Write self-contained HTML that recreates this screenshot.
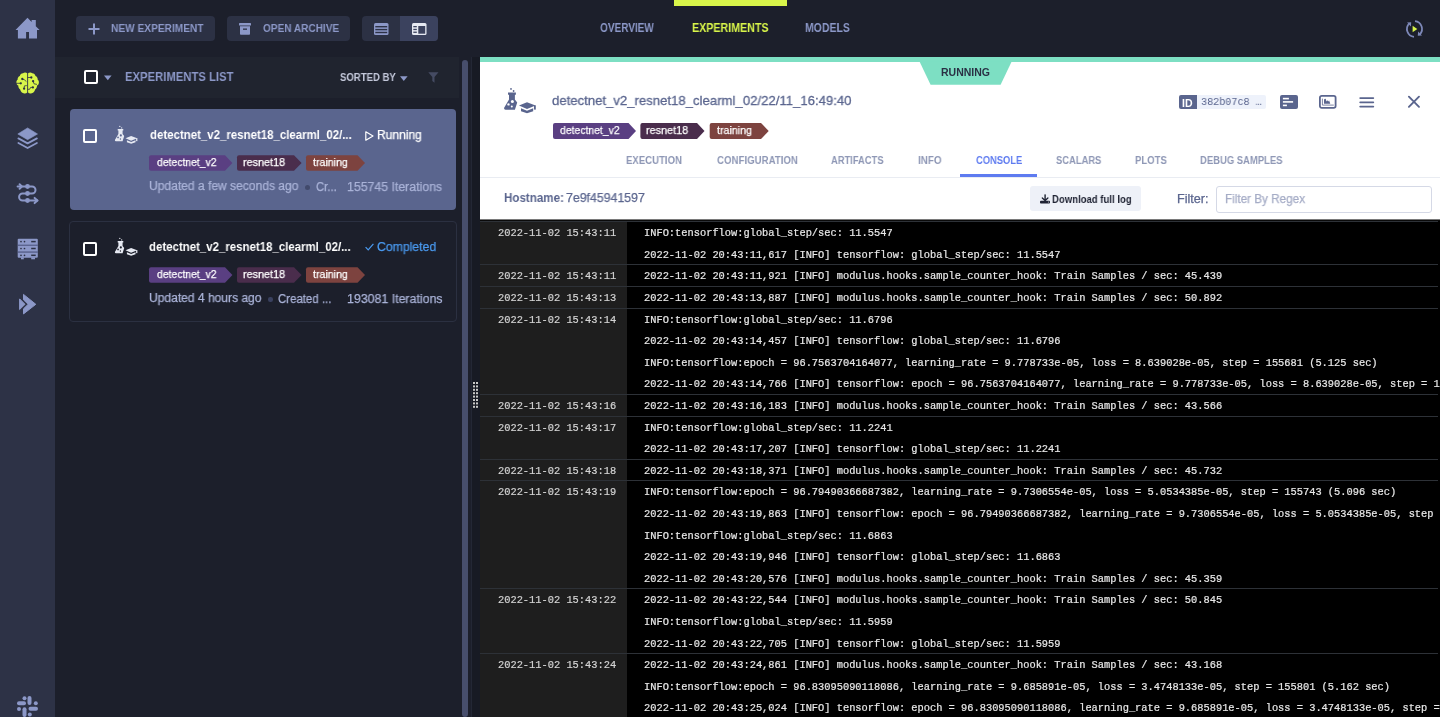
<!DOCTYPE html>
<html><head><meta charset="utf-8">
<style>
*{margin:0;padding:0;box-sizing:border-box}
html,body{width:1440px;height:717px;overflow:hidden;background:#1c1f2b;font-family:"Liberation Sans",sans-serif}
.a{position:absolute}
.t{position:absolute;white-space:nowrap;line-height:1;transform-origin:0 0;will-change:transform}
svg{position:absolute;overflow:visible}
.cb{position:absolute;width:14px;height:14px;border:2px solid #fff;border-radius:2px}
.tag{position:absolute}
#log{left:480px;top:220px;width:960px;height:497px;background:#000;overflow:hidden}
.ln{position:absolute;will-change:transform;font-family:"Liberation Mono",monospace;font-size:10.36px;color:#e8e8e8;white-space:pre;line-height:1;-webkit-text-stroke:0.2px #e8e8e8}
.ts{color:#d4d4d4;-webkit-text-stroke:0.2px #d4d4d4}
.sep{position:absolute;left:0;width:958px;height:1px;background:#2d3137}
</style></head><body>
<!-- sidebar -->
<div class="a" style="left:0;top:0;width:55px;height:717px;background:#2d3246"></div>
<!-- home -->
<svg style="left:12px;top:14px" width="30" height="28" viewBox="0 0 30 28"><path d="M3.5 16 L15.5 3.7 L19.6 7.9 V5.9 H23.8 V12.2 L27.6 16 H25 V24.4 H17 V18 H14.1 V24.4 H5.9 V16 Z" fill="#8c98c8"/></svg>
<!-- brain -->
<svg style="left:12px;top:68px" width="32" height="30" viewBox="0 0 32 30">
<path d="M15.2 5.3 C14.4 4.5 12.2 4.3 11 5.2 C9.4 5.2 8.1 6.4 7.8 8 C6.3 8.6 5.5 10 5.7 11.4 C4.5 12.2 4.1 13.8 4.5 15.2 C4.6 16.3 5.4 17.2 6.3 17.6 C6.2 19.4 6.9 20.8 8.2 21.5 C8.6 23.5 10.2 25.3 12.3 25.5 C13.4 25.7 14.6 25.3 15.2 24.6 Z" fill="#d8f54a"/>
<path d="M16.1 5.3 C16.9 4.5 19.1 4.3 20.3 5.2 C21.9 5.2 23.2 6.4 23.5 8 C25 8.6 25.8 10 25.6 11.4 C26.8 12.2 27.2 13.8 26.8 15.2 C26.7 16.3 25.9 17.2 25 17.6 C25.1 19.4 24.4 20.8 23.1 21.5 C22.7 23.5 21.1 25.3 19 25.5 C17.9 25.7 16.7 25.3 16.1 24.6 Z" fill="#d8f54a"/>
<g stroke="#2c3144" stroke-width="0.8" fill="none"><path d="M10.3 11 L12.5 11.9 L14.4 13.6"/><path d="M4 15.3 H8.8"/><path d="M12.1 20.7 L12.4 17.9 L14.8 17.6"/><path d="M19.3 9.5 H15.6"/><path d="M21.1 13.2 L22 15.8 L25 16.4"/><path d="M20.9 19.4 H18.6 L17.6 21.3 H15.6"/></g>
<g fill="#2c3144"><circle cx="10.3" cy="11" r="1.15"/><circle cx="8.8" cy="15.3" r="1.15"/><circle cx="12.1" cy="20.7" r="1.15"/><circle cx="19.3" cy="9.5" r="1.15"/><circle cx="21.1" cy="13.2" r="1.15"/><circle cx="20.9" cy="19.4" r="1.15"/></g>
</svg>
<!-- layers -->
<svg style="left:14px;top:124px" width="28" height="28" viewBox="0 0 28 28"><path d="M13.6 3.9 L23.5 10 L13.6 15.7 L3.8 10 Z" fill="#8c98c8" stroke="#8c98c8" stroke-width="0.6" stroke-linejoin="round"/><path d="M4.4 14.4 L13.6 19.4 L22.9 14.4 M4.4 19 L13.6 24 L22.9 19" fill="none" stroke="#8c98c8" stroke-width="1.8" stroke-linecap="round" stroke-linejoin="round"/></svg>
<!-- pipelines -->
<svg style="left:14px;top:180px" width="28" height="28" viewBox="0 0 28 28"><g fill="none" stroke="#8c98c8" stroke-width="2" stroke-linecap="round" stroke-linejoin="round"><path d="M3.6 6.5 H18 A3.5 3.5 0 0 1 18 13.5 H8.6 A3.5 3.5 0 0 0 8.6 20.5 H23.4"/><path d="M5.6 4.3 L7.9 6.5 L5.6 8.7"/><path d="M20.6 17.9 L23.4 20.5 L20.6 23.1"/></g><g fill="#8c98c8"><circle cx="13.5" cy="6.5" r="2.4"/><circle cx="13.5" cy="13.5" r="2.4"/><circle cx="13.5" cy="20.5" r="2.4"/></g></svg>
<!-- servers -->
<svg style="left:17px;top:238px" width="22" height="22" viewBox="0 0 22 22"><g fill="#8c98c8"><rect x="0.7" y="0.7" width="20.1" height="19.1" rx="1"/><rect x="4" y="19.3" width="2.8" height="2"/><rect x="14.2" y="19.3" width="3.8" height="2"/></g><g fill="#48507a"><rect x="0.7" y="6.7" width="20.1" height="1"/><rect x="0.7" y="13.5" width="20.1" height="1.1"/></g><g fill="#2d3246"><circle cx="4" cy="3.6" r="0.85"/><circle cx="7.5" cy="3.6" r="0.85"/><rect x="14.2" y="2.85" width="4.5" height="1.5"/><circle cx="4" cy="10.5" r="0.85"/><circle cx="7.5" cy="10.5" r="0.85"/><rect x="14.2" y="9.75" width="4.5" height="1.5"/><circle cx="4" cy="17.3" r="0.85"/><circle cx="7.5" cy="17.3" r="0.85"/><rect x="14.2" y="16.55" width="4.5" height="1.5"/></g></svg>
<!-- deploy -->
<svg style="left:14px;top:290px" width="28" height="28" viewBox="0 0 28 28"><g fill="#8c98c8" stroke="#8c98c8" stroke-width="1" stroke-linejoin="round"><path d="M5.6 8.9 L11 14.3 L5.6 19.5 Z"/><path d="M9.5 4.4 L21.8 14.3 L9.5 23.9 V18.8 L14.2 14.3 L9.5 9.8 Z"/></g></svg>
<!-- slack -->
<svg style="left:17px;top:696px" width="21" height="21" viewBox="0 0 21 21"><g fill="#8c98c8"><rect x="10.5" y="0" width="4" height="9" rx="2"/><circle cx="7.5" cy="2.3" r="2"/><rect x="0" y="5.3" width="9" height="4" rx="2"/><circle cx="18.8" cy="7.3" r="2"/><rect x="11.5" y="10.8" width="9.5" height="4" rx="2"/><circle cx="2" cy="13" r="2"/><rect x="5.5" y="11.2" width="4" height="9.8" rx="2"/><circle cx="12.8" cy="18.5" r="2"/></g></svg>

<!-- top buttons -->
<div class="a" style="left:76px;top:16px;width:139px;height:25px;background:#2c3144;border-radius:4px"></div>
<svg style="left:88px;top:23px" width="12" height="12" viewBox="0 0 12 12"><path d="M6 0.5 V11.5 M0.5 6 H11.5" stroke="#8c98c8" stroke-width="2"/></svg>
<div class="a" style="left:227px;top:16px;width:123px;height:25px;background:#2c3144;border-radius:4px"></div>
<svg style="left:239px;top:23px" width="12" height="12" viewBox="0 0 12 12"><rect x="0" y="0" width="12" height="2.5" rx="0.6" fill="#8c98c8"/><path d="M1 3.3 H11 V11 Q11 11.8 10.2 11.8 H1.8 Q1 11.8 1 11 Z" fill="#8c98c8"/><rect x="4" y="5.5" width="4" height="1.3" fill="#2c3144"/></svg>
<div class="a" style="left:362px;top:16px;width:76px;height:25px;background:#2c3144;border-radius:4px"></div>
<div class="a" style="left:400px;top:16px;width:38px;height:25px;background:#3b425e;border-radius:0 4px 4px 0"></div>
<svg style="left:373.5px;top:23px" width="15" height="12" viewBox="0 0 15 12"><rect x="0" y="0" width="14.5" height="12" rx="1.5" fill="#8c98c8"/><g fill="#2d3246"><rect x="1.3" y="3" width="11.9" height="1.4"/><rect x="1.3" y="5.9" width="11.9" height="1.4"/><rect x="1.3" y="8.8" width="11.9" height="1.4"/></g></svg>
<svg style="left:412px;top:23px" width="15" height="12" viewBox="0 0 15 12"><rect x="0" y="0" width="14.5" height="12" rx="1.5" fill="#e6e9f2"/><rect x="6.3" y="3" width="6.9" height="7.7" fill="#3b425e"/><g fill="#3b425e"><rect x="1.3" y="3" width="3.5" height="1.3"/><rect x="1.3" y="5.8" width="3.5" height="1.3"/><rect x="1.3" y="8.6" width="3.5" height="1.3"/></g></svg>

<!-- nav -->
<div class="a" style="left:674px;top:0;width:113px;height:6px;background:#d8f54a"></div>
<!-- sync icon -->
<svg style="left:1405px;top:20px" width="19" height="18" viewBox="0 0 19 18"><g fill="none" stroke="#7d88b8" stroke-width="1.8"><path d="M10 1.2 A7.8 7.8 0 0 1 14.8 14.4"/><path d="M9 16.8 A7.8 7.8 0 0 1 4.2 3.6"/></g><path d="M2 2.6 L6.2 2.3 L5.9 6.4 Z" fill="#7d88b8"/><path d="M17 15.4 L12.8 15.7 L13.1 11.6 Z" fill="#7d88b8"/><path d="M7.6 5.8 L12.3 9 L7.6 12.2 Z" fill="#d8f54a"/></svg>

<!-- list header -->
<div class="a" style="left:55px;top:57px;width:404px;height:41px;background:#20242f"></div>
<div class="cb" style="left:84px;top:70px"></div>
<svg style="left:104px;top:75px" width="8" height="6" viewBox="0 0 8 6"><path d="M0 0.5 H7.6 L3.8 5.3 Z" fill="#8c98c8"/></svg>
<svg style="left:399.5px;top:76px" width="8" height="6" viewBox="0 0 8 6"><path d="M0 0.3 H7.6 L3.8 5 Z" fill="#8c98c8"/></svg>
<svg style="left:427.5px;top:72px" width="11" height="11" viewBox="0 0 11 11"><path d="M0.3 0.3 H10.5 L6.5 5 V10.8 L4.3 9 V5 Z" fill="#454b63"/></svg>

<!-- card 1 -->
<div class="a" style="left:70px;top:109px;width:386px;height:101px;background:#5a658e;border-radius:4px"></div>
<div class="cb" style="left:83px;top:129px"></div>
<svg style="left:112.2px;top:123.3px" width="28.4" height="24.1" viewBox="0 0 40 34"><g fill="#e6e9f2"><circle cx="11" cy="4.9" r="0.9"/><circle cx="13.6" cy="7" r="0.9"/><path d="M8 8.5 H15.9 V10.7 H14.9 V15.6 L17.2 18.5 L14.9 25.8 H5.5 Q4 25.8 4 24 L9 15.6 V10.7 H8 Z"/><path d="M19 21.6 L27 18.2 L35.5 21.6 L27 25 Z"/><rect x="34" y="21.3" width="1.8" height="4.3"/><path d="M21 24.2 L27 26.8 L33.2 24.2 V27.3 L27 29.2 L21 27.3 Z"/></g><g fill="#5a658e"><circle cx="12.4" cy="17.5" r="1.5"/><circle cx="8.5" cy="20.4" r="1.2"/><circle cx="11.8" cy="22.5" r="1"/></g></svg>
<svg style="left:364.5px;top:130.5px" width="9" height="10" viewBox="0 0 9 10"><path d="M0.8 0.8 L8 5 L0.8 9.2 Z" fill="none" stroke="#fff" stroke-width="1.2" stroke-linejoin="round"/></svg>
<div class="a" style="left:305px;top:185px;width:5px;height:5px;border-radius:50%;background:#424a6c"></div>

<!-- card 2 -->
<div class="a" style="left:69px;top:221px;width:388px;height:101px;border:1px solid #2b3041;border-radius:4px"></div>
<div class="cb" style="left:83px;top:241.5px"></div>
<svg style="left:112.2px;top:235.3px" width="28.4" height="24.1" viewBox="0 0 40 34"><g fill="#e6e9f2"><circle cx="11" cy="4.9" r="0.9"/><circle cx="13.6" cy="7" r="0.9"/><path d="M8 8.5 H15.9 V10.7 H14.9 V15.6 L17.2 18.5 L14.9 25.8 H5.5 Q4 25.8 4 24 L9 15.6 V10.7 H8 Z"/><path d="M19 21.6 L27 18.2 L35.5 21.6 L27 25 Z"/><rect x="34" y="21.3" width="1.8" height="4.3"/><path d="M21 24.2 L27 26.8 L33.2 24.2 V27.3 L27 29.2 L21 27.3 Z"/></g><g fill="#1b1e2a"><circle cx="12.4" cy="17.5" r="1.5"/><circle cx="8.5" cy="20.4" r="1.2"/><circle cx="11.8" cy="22.5" r="1"/></g></svg>
<svg style="left:364.5px;top:243px" width="9" height="8" viewBox="0 0 9 8"><path d="M0.6 4.2 L3.2 6.8 L8.4 0.8" fill="none" stroke="#4a9af0" stroke-width="1.2"/></svg>
<div class="a" style="left:268.3px;top:297px;width:4.5px;height:4.5px;border-radius:50%;background:#3a4160"></div>

<!-- tags -->
<svg style="left:149px;top:155.2px" width="220" height="16" viewBox="0 0 220 15.5"><path d="M0 2 Q0 0 2 0 H76 L83.4 7.75 L76 15.5 H2 Q0 15.5 0 13.5 Z" fill="#5a3f82"/><path d="M88 2 Q88 0 90 0 H145 L152.6 7.75 L145 15.5 H90 Q88 15.5 88 13.5 Z" fill="#4a2d4c"/><path d="M157 2 Q157 0 159 0 H208.5 L216 7.75 L208.5 15.5 H159 Q157 15.5 157 13.5 Z" fill="#7d433f"/></svg>
<svg style="left:149px;top:267.2px" width="220" height="16" viewBox="0 0 220 15.5"><path d="M0 2 Q0 0 2 0 H76 L83.4 7.75 L76 15.5 H2 Q0 15.5 0 13.5 Z" fill="#5a3f82"/><path d="M88 2 Q88 0 90 0 H145 L152.6 7.75 L145 15.5 H90 Q88 15.5 88 13.5 Z" fill="#4a2d4c"/><path d="M157 2 Q157 0 159 0 H208.5 L216 7.75 L208.5 15.5 H159 Q157 15.5 157 13.5 Z" fill="#7d433f"/></svg>

<!-- scrollbar / splitter -->
<div class="a" style="left:462px;top:60px;width:5.5px;height:657px;background:#474e6c;border-radius:3px"></div>
<div class="a" style="left:470.5px;top:57px;width:1.5px;height:660px;background:#232735"></div>
<div class="a" style="left:472px;top:57px;width:8px;height:660px;background:#171a24"></div>
<svg style="left:473px;top:382px" width="6" height="27" viewBox="0 0 6 27"><g fill="#c8c8c8"><rect x="0" y="0" width="2" height="2"/><rect x="3" y="0" width="2" height="2"/><rect x="0" y="3.4" width="2" height="2"/><rect x="3" y="3.4" width="2" height="2"/><rect x="0" y="6.8" width="2" height="2"/><rect x="3" y="6.8" width="2" height="2"/><rect x="0" y="10.2" width="2" height="2"/><rect x="3" y="10.2" width="2" height="2"/><rect x="0" y="13.6" width="2" height="2"/><rect x="3" y="13.6" width="2" height="2"/><rect x="0" y="17" width="2" height="2"/><rect x="3" y="17" width="2" height="2"/><rect x="0" y="20.4" width="2" height="2"/><rect x="3" y="20.4" width="2" height="2"/><rect x="0" y="23.8" width="2" height="2"/><rect x="3" y="23.8" width="2" height="2"/></g></svg>

<!-- right panel -->
<div class="a" style="left:480px;top:57px;width:960px;height:163px;background:#fff"></div>
<div class="a" style="left:480px;top:57px;width:960px;height:5px;background:#7ddfc3"></div>
<svg style="left:919px;top:61px" width="93" height="24" viewBox="0 0 93 23.5"><path d="M0.4 0 H92.8 L81.6 23.5 H11.6 Z" fill="#7ddfc3"/></svg>
<svg style="left:500px;top:84px" width="40" height="34" viewBox="0 0 40 34"><g fill="#5a658e"><circle cx="11" cy="4.9" r="0.9"/><circle cx="13.6" cy="7" r="0.9"/><path d="M8 8.5 H15.9 V10.7 H14.9 V15.6 L17.2 18.5 L14.9 25.8 H5.5 Q4 25.8 4 24 L9 15.6 V10.7 H8 Z"/><path d="M19 21.6 L27 18.2 L35.5 21.6 L27 25 Z"/><rect x="34" y="21.3" width="1.8" height="4.3"/><path d="M21 24.2 L27 26.8 L33.2 24.2 V27.3 L27 29.2 L21 27.3 Z"/></g><g fill="#fff"><circle cx="12.4" cy="17.5" r="1.5"/><circle cx="8.5" cy="20.4" r="1.2"/><circle cx="11.8" cy="22.5" r="1"/></g></svg>
<svg style="left:553px;top:123.1px" width="220" height="16" viewBox="0 0 220 16"><path d="M0 2 Q0 0 2 0 H75.5 L83 8 L75.5 16 H2 Q0 16 0 14 Z" fill="#5a3f82"/><path d="M87.4 2 Q87.4 0 89.4 0 H144 L151.5 8 L144 16 H89.4 Q87.4 16 87.4 14 Z" fill="#4a2d4c"/><path d="M156.7 2 Q156.7 0 158.7 0 H208 L215.7 8 L208 16 H158.7 Q156.7 16 156.7 14 Z" fill="#7d433f"/></svg>

<!-- id & icons -->
<div class="a" style="left:1179px;top:95px;width:17.5px;height:13.5px;background:#5a658e;border-radius:2px 0 0 2px"></div>
<div class="a" style="left:1196.5px;top:95px;width:69.5px;height:13.5px;background:#eef2fb;border-radius:0 2px 2px 0"></div>
<div class="a" style="left:1280px;top:95.2px;width:17.5px;height:13.7px;background:#5a658e;border-radius:2px"></div>
<svg style="left:1280px;top:95.2px" width="18" height="14" viewBox="0 0 18 14"><g fill="#fff"><rect x="2.9" y="2.8" width="6" height="1.6"/><rect x="2.9" y="6.1" width="10.2" height="1.6"/><rect x="2.9" y="9.6" width="4" height="1.6"/></g></svg>
<svg style="left:1319px;top:95.2px" width="18" height="14" viewBox="0 0 18 14"><rect x="0.9" y="0.9" width="15.7" height="11.9" rx="1.8" fill="none" stroke="#5a658e" stroke-width="1.8"/><path d="M3.4 3.6 V10.1 H14.8" fill="none" stroke="#5a658e" stroke-width="0.8"/><path d="M5 8.7 V3.8 L5.9 4.6 L6.7 3.6 L7.4 6.4 L8.3 5.2 L9.2 6.6 L10.1 5.6 L11.3 8.7 Z" fill="#5a658e"/></svg>
<svg style="left:1358.8px;top:96.8px" width="16" height="11" viewBox="0 0 16 11"><path d="M1.2 1.1 H14.3 M1.2 5.3 H14.3 M1.2 9.6 H14.3" stroke="#5a658e" stroke-width="1.8" stroke-linecap="round"/></svg>
<svg style="left:1408px;top:96.4px" width="13" height="12" viewBox="0 0 13 12"><path d="M0.9 0.7 L11 10.8 M11 0.7 L0.9 10.8" stroke="#5a658e" stroke-width="1.9" stroke-linecap="round"/></svg>

<!-- tabs underline -->
<div class="a" style="left:480px;top:177px;width:960px;height:1px;background:#e9ecf2"></div>
<div class="a" style="left:960px;top:174px;width:77px;height:3px;background:#5e7bf0"></div>

<!-- console toolbar -->
<div class="a" style="left:1030.4px;top:186.2px;width:110.6px;height:24.5px;background:#eef1f8;border-radius:3px"></div>
<svg style="left:1040px;top:193.5px" width="10" height="10" viewBox="0 0 10 10"><rect x="4.4" y="0.4" width="1.4" height="5.6" fill="#1f2333"/><path d="M2.3 3.9 L5.1 6.5 L7.9 3.9" fill="none" stroke="#1f2333" stroke-width="1.3" stroke-linecap="round"/><rect x="0" y="6.8" width="10" height="2.6" rx="0.9" fill="#1f2333"/><circle cx="8.4" cy="8.1" r="0.5" fill="#eef1f8"/></svg>
<div class="a" style="left:1216px;top:185.5px;width:216px;height:27px;border:1px solid #d5d9e6;border-radius:3px"></div>
<div class="a" style="left:480px;top:219px;width:960px;height:1px;background:#7a7a7a"></div>

<div class="t" id="newexp" style="left:110.68px;top:23.00px;font-family:'Liberation Sans',sans-serif;font-weight:bold;font-size:11px;color:#8c98c8;transform:scaleX(0.9232);">NEW EXPERIMENT</div>
<div class="t" id="openarch" style="left:262.50px;top:23.00px;font-family:'Liberation Sans',sans-serif;font-weight:bold;font-size:11px;color:#8c98c8;transform:scaleX(0.9133);">OPEN ARCHIVE</div>
<div class="t" id="ov" style="left:600.40px;top:21.90px;font-family:'Liberation Sans',sans-serif;font-weight:bold;font-size:12.4px;color:#8c98c8;transform:scaleX(0.8090);">OVERVIEW</div>
<div class="t" id="exps" style="left:692.14px;top:21.90px;font-family:'Liberation Sans',sans-serif;font-weight:bold;font-size:12.4px;color:#d8f54a;transform:scaleX(0.8621);">EXPERIMENTS</div>
<div class="t" id="models" style="left:805.15px;top:21.90px;font-family:'Liberation Sans',sans-serif;font-weight:bold;font-size:12.4px;color:#8c98c8;transform:scaleX(0.8462);">MODELS</div>
<div class="t" id="elist" style="left:124.59px;top:71.30px;font-family:'Liberation Sans',sans-serif;font-weight:bold;font-size:12.4px;color:#8c98c8;transform:scaleX(0.9110);">EXPERIMENTS LIST</div>
<div class="t" id="sorted" style="left:339.60px;top:72.30px;font-family:'Liberation Sans',sans-serif;font-weight:bold;font-size:10.8px;color:#c3c8da;transform:scaleX(0.8857);">SORTED BY</div>
<div class="t" id="t1" style="left:149.50px;top:128.00px;font-family:'Liberation Sans',sans-serif;font-weight:bold;font-size:13px;color:#ffffff;transform:scaleX(0.8807);">detectnet_v2_resnet18_clearml_02/...</div>
<div class="t" id="run1" style="left:376.94px;top:128.80px;font-family:'Liberation Sans',sans-serif;font-weight:normal;font-size:12.5px;color:#ffffff;transform:scaleX(0.9622);-webkit-text-stroke:0.25px #ffffff">Running</div>
<div class="t" id="up1" style="left:148.54px;top:180.20px;font-family:'Liberation Sans',sans-serif;font-weight:normal;font-size:12.5px;color:#aab3d8;transform:scaleX(0.9643);-webkit-text-stroke:0.25px #aab3d8">Updated a few seconds ago</div>
<div class="t" id="cr1" style="left:315.90px;top:180.50px;font-family:'Liberation Sans',sans-serif;font-weight:normal;font-size:12.5px;color:#aab3d8;transform:scaleX(0.9048);-webkit-text-stroke:0.25px #aab3d8">Cr...</div>
<div class="t" id="it1" style="left:347.42px;top:180.50px;font-family:'Liberation Sans',sans-serif;font-weight:normal;font-size:12.5px;color:#aab3d8;transform:scaleX(0.9842);-webkit-text-stroke:0.25px #aab3d8">155745 Iterations</div>
<div class="t" id="t2" style="left:149.30px;top:240.00px;font-family:'Liberation Sans',sans-serif;font-weight:bold;font-size:13px;color:#ffffff;transform:scaleX(0.8803);">detectnet_v2_resnet18_clearml_02/...</div>
<div class="t" id="comp2" style="left:377.22px;top:240.80px;font-family:'Liberation Sans',sans-serif;font-weight:normal;font-size:12.5px;color:#4a9af0;transform:scaleX(0.9797);-webkit-text-stroke:0.25px #4a9af0">Completed</div>
<div class="t" id="up2" style="left:148.94px;top:292.10px;font-family:'Liberation Sans',sans-serif;font-weight:normal;font-size:12.5px;color:#aab3d8;transform:scaleX(0.9635);-webkit-text-stroke:0.25px #aab3d8">Updated 4 hours ago</div>
<div class="t" id="cr2" style="left:277.99px;top:292.50px;font-family:'Liberation Sans',sans-serif;font-weight:normal;font-size:12.5px;color:#aab3d8;transform:scaleX(0.9140);-webkit-text-stroke:0.25px #aab3d8">Created ...</div>
<div class="t" id="it2" style="left:347.21px;top:292.50px;font-family:'Liberation Sans',sans-serif;font-weight:normal;font-size:12.5px;color:#aab3d8;transform:scaleX(0.9895);-webkit-text-stroke:0.25px #aab3d8">193081 Iterations</div>
<div class="t" id="tg1a" style="left:156.60px;top:156.70px;font-family:'Liberation Sans',sans-serif;font-weight:normal;font-size:11.5px;color:#ffffff;transform:scaleX(0.9031);-webkit-text-stroke:0.25px #ffffff">detectnet_v2</div>
<div class="t" id="tg1b" style="left:242.86px;top:156.70px;font-family:'Liberation Sans',sans-serif;font-weight:normal;font-size:11.5px;color:#ffffff;transform:scaleX(0.9419);-webkit-text-stroke:0.25px #ffffff">resnet18</div>
<div class="t" id="tg1c" style="left:313.20px;top:156.70px;font-family:'Liberation Sans',sans-serif;font-weight:normal;font-size:11.5px;color:#ffffff;transform:scaleX(0.9243);-webkit-text-stroke:0.25px #ffffff">training</div>
<div class="t" id="tg2a" style="left:156.60px;top:268.70px;font-family:'Liberation Sans',sans-serif;font-weight:normal;font-size:11.5px;color:#ffffff;transform:scaleX(0.9031);-webkit-text-stroke:0.25px #ffffff">detectnet_v2</div>
<div class="t" id="tg2b" style="left:242.86px;top:268.70px;font-family:'Liberation Sans',sans-serif;font-weight:normal;font-size:11.5px;color:#ffffff;transform:scaleX(0.9419);-webkit-text-stroke:0.25px #ffffff">resnet18</div>
<div class="t" id="tg2c" style="left:313.20px;top:268.70px;font-family:'Liberation Sans',sans-serif;font-weight:normal;font-size:11.5px;color:#ffffff;transform:scaleX(0.9243);-webkit-text-stroke:0.25px #ffffff">training</div>
<div class="t" id="tgha" style="left:559.90px;top:125.20px;font-family:'Liberation Sans',sans-serif;font-weight:normal;font-size:11.5px;color:#ffffff;transform:scaleX(0.9046);-webkit-text-stroke:0.25px #ffffff">detectnet_v2</div>
<div class="t" id="tghb" style="left:646.46px;top:125.20px;font-family:'Liberation Sans',sans-serif;font-weight:normal;font-size:11.5px;color:#ffffff;transform:scaleX(0.9442);-webkit-text-stroke:0.25px #ffffff">resnet18</div>
<div class="t" id="tghc" style="left:716.90px;top:125.20px;font-family:'Liberation Sans',sans-serif;font-weight:normal;font-size:11.5px;color:#ffffff;transform:scaleX(0.9284);-webkit-text-stroke:0.25px #ffffff">training</div>
<div class="t" id="htitle" style="left:552.03px;top:94.00px;font-family:'Liberation Sans',sans-serif;font-weight:normal;font-size:13.5px;color:#5a658e;transform:scaleX(0.9739);-webkit-text-stroke:0.3px #5a658e">detectnet_v2_resnet18_clearml_02/22/11_16:49:40</div>
<div class="t" id="tab1" style="left:626.43px;top:155.00px;font-family:'Liberation Sans',sans-serif;font-weight:bold;font-size:11px;color:#8f98b6;transform:scaleX(0.8714);">EXECUTION</div>
<div class="t" id="tab2" style="left:717.00px;top:155.00px;font-family:'Liberation Sans',sans-serif;font-weight:bold;font-size:11px;color:#8f98b6;transform:scaleX(0.8791);">CONFIGURATION</div>
<div class="t" id="tab3" style="left:831.30px;top:155.00px;font-family:'Liberation Sans',sans-serif;font-weight:bold;font-size:11px;color:#8f98b6;transform:scaleX(0.8500);">ARTIFACTS</div>
<div class="t" id="tab4" style="left:917.70px;top:155.00px;font-family:'Liberation Sans',sans-serif;font-weight:bold;font-size:11px;color:#8f98b6;transform:scaleX(0.8960);">INFO</div>
<div class="t" id="tab5" style="left:975.80px;top:155.00px;font-family:'Liberation Sans',sans-serif;font-weight:bold;font-size:11px;color:#5e7bf0;transform:scaleX(0.8500);">CONSOLE</div>
<div class="t" id="tab6" style="left:1055.80px;top:155.00px;font-family:'Liberation Sans',sans-serif;font-weight:bold;font-size:11px;color:#8f98b6;transform:scaleX(0.8528);">SCALARS</div>
<div class="t" id="tab7" style="left:1134.63px;top:155.00px;font-family:'Liberation Sans',sans-serif;font-weight:bold;font-size:11px;color:#8f98b6;transform:scaleX(0.8714);">PLOTS</div>
<div class="t" id="tab8" style="left:1199.94px;top:155.00px;font-family:'Liberation Sans',sans-serif;font-weight:bold;font-size:11px;color:#8f98b6;transform:scaleX(0.8600);">DEBUG SAMPLES</div>
<div class="t" id="host" style="left:503.97px;top:192.20px;font-family:'Liberation Sans',sans-serif;font-weight:bold;font-size:12.5px;color:#5a658e;transform:scaleX(0.9270);">Hostname:</div>
<div class="t" id="hostv" style="left:566.01px;top:192.20px;font-family:'Liberation Sans',sans-serif;font-weight:normal;font-size:12.5px;color:#5a658e;transform:scaleX(0.9861);-webkit-text-stroke:0.25px #5a658e">7e9f45941597</div>
<div class="t" id="dl" style="left:1051.93px;top:193.60px;font-family:'Liberation Sans',sans-serif;font-weight:bold;font-size:11px;color:#1f2333;transform:scaleX(0.8689);">Download full log</div>
<div class="t" id="filt" style="left:1176.99px;top:192.60px;font-family:'Liberation Sans',sans-serif;font-weight:normal;font-size:12.5px;color:#5a658e;transform:scaleX(1.0103);-webkit-text-stroke:0.25px #5a658e">Filter:</div>
<div class="t" id="filtph" style="left:1225.46px;top:192.90px;font-family:'Liberation Sans',sans-serif;font-weight:normal;font-size:12.5px;color:#a5acc6;transform:scaleX(0.9369);-webkit-text-stroke:0.25px #a5acc6">Filter By Regex</div>
<div class="t" id="badge" style="left:940.81px;top:66.70px;font-family:'Liberation Sans',sans-serif;font-weight:bold;font-size:10.5px;color:#2a3044;transform:scaleX(0.9915);">RUNNING</div>
<div class="t" id="idl" style="left:1181.94px;top:98.60px;font-family:'Liberation Sans',sans-serif;font-weight:bold;font-size:10px;color:#ffffff;transform:scaleX(1.0556);">ID</div>
<div class="t" id="idv" style="left:1201.37px;top:96.40px;font-family:'Liberation Mono',monospace;font-weight:normal;font-size:11.5px;color:#5a658e;transform:scaleX(0.8806);">382b07c8 …</div>

<div id="log" class="a">
<div class="a" style="left:0;top:1px;width:147px;height:496px;background:#1e1e1e"></div>
<div class="a" style="left:0;top:0;width:960px;height:1px;background:#0a0a0a"></div>
<div class="sep" style="top:1.3px"></div>
<div class="ln ts" style="left:18px;top:8.10px">2022-11-02 15:43:11</div>
<div class="ln" style="left:164.3px;top:8.10px">INFO:tensorflow:global_step/sec: 11.5547</div>
<div class="ln" style="left:164.3px;top:29.70px">2022-11-02 20:43:11,617 [INFO] tensorflow: global_step/sec: 11.5547</div>
<div class="sep" style="top:44.40px"></div>
<div class="ln ts" style="left:18px;top:51.30px">2022-11-02 15:43:11</div>
<div class="ln" style="left:164.3px;top:51.30px">2022-11-02 20:43:11,921 [INFO] modulus.hooks.sample_counter_hook: Train Samples / sec: 45.439</div>
<div class="sep" style="top:66.00px"></div>
<div class="ln ts" style="left:18px;top:72.90px">2022-11-02 15:43:13</div>
<div class="ln" style="left:164.3px;top:72.90px">2022-11-02 20:43:13,887 [INFO] modulus.hooks.sample_counter_hook: Train Samples / sec: 50.892</div>
<div class="sep" style="top:87.60px"></div>
<div class="ln ts" style="left:18px;top:94.50px">2022-11-02 15:43:14</div>
<div class="ln" style="left:164.3px;top:94.50px">INFO:tensorflow:global_step/sec: 11.6796</div>
<div class="ln" style="left:164.3px;top:116.10px">2022-11-02 20:43:14,457 [INFO] tensorflow: global_step/sec: 11.6796</div>
<div class="ln" style="left:164.3px;top:137.70px">INFO:tensorflow:epoch = 96.7563704164077, learning_rate = 9.778733e-05, loss = 8.639028e-05, step = 155681 (5.125 sec)</div>
<div class="ln" style="left:164.3px;top:159.30px">2022-11-02 20:43:14,766 [INFO] tensorflow: epoch = 96.7563704164077, learning_rate = 9.778733e-05, loss = 8.639028e-05, step = 155681</div>
<div class="sep" style="top:174.00px"></div>
<div class="ln ts" style="left:18px;top:180.90px">2022-11-02 15:43:16</div>
<div class="ln" style="left:164.3px;top:180.90px">2022-11-02 20:43:16,183 [INFO] modulus.hooks.sample_counter_hook: Train Samples / sec: 43.566</div>
<div class="sep" style="top:195.60px"></div>
<div class="ln ts" style="left:18px;top:202.50px">2022-11-02 15:43:17</div>
<div class="ln" style="left:164.3px;top:202.50px">INFO:tensorflow:global_step/sec: 11.2241</div>
<div class="ln" style="left:164.3px;top:224.10px">2022-11-02 20:43:17,207 [INFO] tensorflow: global_step/sec: 11.2241</div>
<div class="sep" style="top:238.80px"></div>
<div class="ln ts" style="left:18px;top:245.70px">2022-11-02 15:43:18</div>
<div class="ln" style="left:164.3px;top:245.70px">2022-11-02 20:43:18,371 [INFO] modulus.hooks.sample_counter_hook: Train Samples / sec: 45.732</div>
<div class="sep" style="top:260.40px"></div>
<div class="ln ts" style="left:18px;top:267.30px">2022-11-02 15:43:19</div>
<div class="ln" style="left:164.3px;top:267.30px">INFO:tensorflow:epoch = 96.79490366687382, learning_rate = 9.7306554e-05, loss = 5.0534385e-05, step = 155743 (5.096 sec)</div>
<div class="ln" style="left:164.3px;top:288.90px">2022-11-02 20:43:19,863 [INFO] tensorflow: epoch = 96.79490366687382, learning_rate = 9.7306554e-05, loss = 5.0534385e-05, step = 155743</div>
<div class="ln" style="left:164.3px;top:310.50px">INFO:tensorflow:global_step/sec: 11.6863</div>
<div class="ln" style="left:164.3px;top:332.10px">2022-11-02 20:43:19,946 [INFO] tensorflow: global_step/sec: 11.6863</div>
<div class="ln" style="left:164.3px;top:353.70px">2022-11-02 20:43:20,576 [INFO] modulus.hooks.sample_counter_hook: Train Samples / sec: 45.359</div>
<div class="sep" style="top:368.40px"></div>
<div class="ln ts" style="left:18px;top:375.30px">2022-11-02 15:43:22</div>
<div class="ln" style="left:164.3px;top:375.30px">2022-11-02 20:43:22,544 [INFO] modulus.hooks.sample_counter_hook: Train Samples / sec: 50.845</div>
<div class="ln" style="left:164.3px;top:396.90px">INFO:tensorflow:global_step/sec: 11.5959</div>
<div class="ln" style="left:164.3px;top:418.50px">2022-11-02 20:43:22,705 [INFO] tensorflow: global_step/sec: 11.5959</div>
<div class="sep" style="top:433.20px"></div>
<div class="ln ts" style="left:18px;top:440.10px">2022-11-02 15:43:24</div>
<div class="ln" style="left:164.3px;top:440.10px">2022-11-02 20:43:24,861 [INFO] modulus.hooks.sample_counter_hook: Train Samples / sec: 43.168</div>
<div class="ln" style="left:164.3px;top:461.70px">INFO:tensorflow:epoch = 96.83095090118086, learning_rate = 9.685891e-05, loss = 3.4748133e-05, step = 155801 (5.162 sec)</div>
<div class="ln" style="left:164.3px;top:483.30px">2022-11-02 20:43:25,024 [INFO] tensorflow: epoch = 96.83095090118086, learning_rate = 9.685891e-05, loss = 3.4748133e-05, step = 155801</div>
<div class="sep" style="top:498.00px"></div>
</div>
</body></html>
